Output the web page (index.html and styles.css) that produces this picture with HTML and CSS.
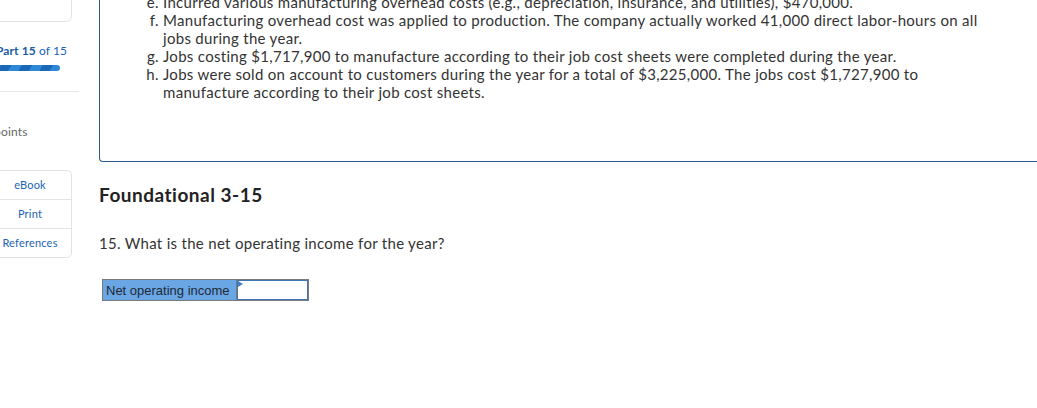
FILE: index.html
```html
<!DOCTYPE html>
<html>
<head>
<meta charset="utf-8">
<link rel="stylesheet" href="styles.css">
</head>
<body>
<div class="page">
  <aside class="sidebar">
    <div class="card-top"></div>
    <div class="part"><b>Part 15</b> of 15</div>
    <div class="progress"></div>
    <hr class="divider">
    <div class="points">points</div>
    <div class="btn-group">
      <div class="btn">eBook</div>
      <div class="btn">Print</div>
      <div class="btn">References</div>
    </div>
  </aside>
  <main class="main">
    <div class="problem">
      <ol class="steps" type="a" start="5">
        <li>Incurred various manufacturing overhead costs (e.g., depreciation, insurance, and utilities), $470,000.</li>
        <li>Manufacturing overhead cost was applied to production. The company actually worked 41,000 direct labor-hours on all jobs during the year.</li>
        <li>Jobs costing $1,717,900 to manufacture according to their job cost sheets were completed during the year.</li>
        <li>Jobs were sold on account to customers during the year for a total of $3,225,000. The jobs cost $1,727,900 to manufacture according to their job cost sheets.</li>
      </ol>
    </div>
    <h2 class="title">Foundational 3-15</h2>
    <p class="question">15. What is the net operating income for the year?</p>
    <table class="answer">
      <tr>
        <td class="label">Net operating income</td>
        <td class="input"><span class="flag"></span></td>
      </tr>
    </table>
  </main>
</div>
</body>
</html>
```

FILE: styles.css
```css
html, body {
  margin: 0;
  padding: 0;
  background: #fff;
  overflow: hidden;
}
body {
  width: 1037px;
  height: 408px;
  font-family: Lato, "Open Sans", sans-serif;
  color: #333;
}
.page {
  display: flex;
  align-items: flex-start;
}
.sidebar {
  width: 91px;
  margin-left: -12px;
  flex-shrink: 0;
  display: flex;
  flex-direction: column;
}
.card-top {
  height: 40px;
  margin-top: -20px;
  margin-right: 7px;
  border: 1px solid #e3e3e3;
  border-radius: 0 0 6px 6px;
}
.part {
  margin-top: 21px;
  font-size: 12px;
  line-height: 16px;
  color: #1b63b5;
  padding-left: 8px;
  letter-spacing: 0.1px;
}
.part b {
  font-weight: 700;
  color: #1a5aa3;
}
.progress {
  margin-top: 6px;
  width: 72px;
  height: 6px;
  border-radius: 0 3px 3px 0;
  background: repeating-linear-gradient(-60deg, #2e88d8 0 9px, #1a69b7 9px 18px);
}
.divider {
  margin: 20px 0 0 0;
  border: 0;
  border-top: 1px solid #e6e6e6;
  height: 0;
}
.points {
  margin-top: 32px;
  font-size: 12px;
  line-height: 16px;
  color: #666;
  padding-left: 6px;
  letter-spacing: 0.2px;
}
.btn-group {
  margin-top: 30px;
  margin-right: 7px;
  border: 1px solid #e3e3e3;
  border-radius: 0 5px 5px 0;
}
.btn {
  height: 28px;
  line-height: 28px;
  text-align: center;
  font-size: 11px;
  color: #1b63b5;
  letter-spacing: 0.2px;
}
.btn + .btn {
  border-top: 1px solid #e3e3e3;
}
.main {
  margin-left: 20px;
  flex: 1;
}
.problem {
  margin-top: -30px;
  margin-right: -10px;
  border: 1px solid #2b5a88;
  border-top: 0;
  border-right: 0;
  border-bottom-left-radius: 4px;
  padding: 23px 0 60px 0;
}
.steps {
  margin: 0;
  padding-left: 63px;
  width: 835px;
  font-size: 15px;
  line-height: 18px;
  list-style-type: lower-alpha;
  letter-spacing: 0.3px;
}
.title {
  margin: 22px 0 0 0;
  font-size: 19px;
  line-height: 22px;
  font-weight: 700;
  color: #222;
  letter-spacing: 0.5px;
}
.question {
  margin: 28px 0 0 0;
  font-size: 15px;
  line-height: 18px;
  color: #333;
  letter-spacing: 0.3px;
}
.answer {
  margin-top: 27px;
  margin-left: 3px;
  border-collapse: collapse;
  font-family: "Liberation Sans", Arial, sans-serif;
}
.answer td {
  padding: 0;
  height: 20px;
}
.label {
  width: 130px;
  background: #6aa6e4;
  border: 1px solid #7a7a7a;
  font-size: 13px;
  color: #1f2a36;
  padding: 0 0 0 3px !important;
  white-space: nowrap;
}
.input {
  width: 71px;
  border: 1px solid #7a7a7a;
  box-shadow: inset 0 0 0 1px #3f74b8;
  position: relative;
  background: #fff;
}
.flag {
  position: absolute;
  left: 1px;
  top: 1px;
  width: 0;
  height: 0;
  border-top: 3px solid transparent;
  border-bottom: 3px solid transparent;
  border-left: 5px solid #3f7fd0;
}
```
